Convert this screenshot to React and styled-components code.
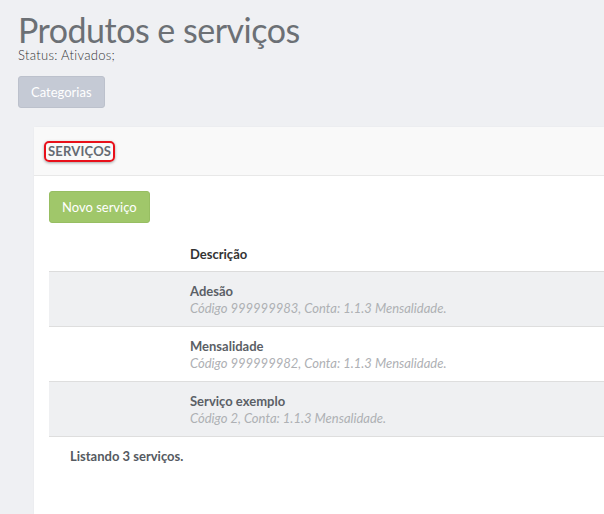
import React from "react";
import styled, { createGlobalStyle } from "styled-components";

const Global = createGlobalStyle`
  html, body { margin: 0; padding: 0; }
  body {
    background: #eff0f3;
    font-family: Lato, "Open Sans", sans-serif;
    color: #333;
    overflow: hidden;
  }
`;

const Page = styled.div`
  padding: 13px 0 0 18px;
  width: 604px;
  height: 514px;
  box-sizing: border-box;
  display: flex;
  flex-direction: column;
`;

const Title = styled.h1`
  margin: 0;
  font-size: 34px;
  font-weight: 400;
  letter-spacing: -0.5px;
  color: #6c7075;
  line-height: 34px;
`;

const Status = styled.div`
  font-size: 13px;
  font-weight: 300;
  letter-spacing: 0.3px;
  color: #333;
  line-height: 16px;
`;

const Button = styled.button`
  font-family: inherit;
  font-size: 13px;
  color: #fff;
  border: 1px solid ${(p) => p.$border};
  background: ${(p) => p.$bg};
  border-radius: 3px;
  height: 32px;
  padding: 0 12px;
  align-self: flex-start;
`;

const Card = styled.div`
  margin: 19px 0 0 16px;
  flex: 1;
  background: #fff;
  border-top-left-radius: 3px;
  box-shadow: 0 0 2px rgba(0, 0, 0, 0.06);
  display: flex;
  flex-direction: column;
`;

const CardHeader = styled.div`
  height: 48px;
  background: #f9f9f9;
  border-bottom: 1px solid #e8e8e8;
  display: flex;
  align-items: center;
  padding-left: 10px;
`;

const Highlight = styled.span`
  font-size: 13px;
  font-weight: 700;
  letter-spacing: 0.2px;
  color: #656a72;
  text-transform: uppercase;
  border: 2px solid #e8101a;
  border-radius: 5px;
  padding: 1px 2px;
  box-shadow: 0 1px 3px rgba(0, 0, 0, 0.35);
  line-height: 15px;
`;

const CardBody = styled.div`
  padding: 15px 0 0 15px;
  display: flex;
  flex-direction: column;
`;

const Table = styled.div`
  margin-top: 13px;
  display: flex;
  flex-direction: column;
`;

const Row = styled.div`
  display: grid;
  grid-template-columns: 141px 1fr;
  height: ${(p) => (p.$head ? "36px" : "55px")};
  background: ${(p) => (p.$striped ? "#eff0f2" : "#fff")};
  border-bottom: 1px solid ${(p) => (p.$head ? "#dcdcdc" : "#dedede")};
  box-sizing: border-box;
  align-items: center;
`;

const HeadCell = styled.div`
  grid-column: 2;
  font-size: 13px;
  font-weight: 700;
  color: #333;
`;

const Cell = styled.div`
  grid-column: 2;
  display: flex;
  flex-direction: column;
  gap: 1px;
`;

const Name = styled.div`
  font-size: 13px;
  font-weight: 700;
  color: #5b5f66;
`;

const Meta = styled.div`
  font-size: 13px;
  font-style: italic;
  color: #aeb0b4;
`;

const Footer = styled.div`
  padding: 11px 0 0 21px;
  font-size: 13px;
  font-weight: 700;
  color: #555a61;
`;

const rows = [
  { name: "Adesão", meta: "Código 999999983, Conta: 1.1.3 Mensalidade." },
  { name: "Mensalidade", meta: "Código 999999982, Conta: 1.1.3 Mensalidade." },
  { name: "Serviço exemplo", meta: "Código 2, Conta: 1.1.3 Mensalidade." },
];

export default function App() {
  return (
    <>
      <Global />
      <Page>
        <Title>Produtos e serviços</Title>
        <Status>Status: Ativados;</Status>
        <Button $bg="#c5cad5" $border="#bcc1cc" style={{ marginTop: 13 }}>
          Categorias
        </Button>
        <Card>
          <CardHeader>
            <Highlight>Serviços</Highlight>
          </CardHeader>
          <CardBody>
            <Button $bg="#a0c76a" $border="#97be62">Novo serviço</Button>
            <Table>
              <Row $head>
                <HeadCell>Descrição</HeadCell>
              </Row>
              {rows.map((r, i) => (
                <Row key={r.name} $striped={i % 2 === 0}>
                  <Cell>
                    <Name>{r.name}</Name>
                    <Meta>{r.meta}</Meta>
                  </Cell>
                </Row>
              ))}
            </Table>
            <Footer>Listando 3 serviços.</Footer>
          </CardBody>
        </Card>
      </Page>
    </>
  );
}
